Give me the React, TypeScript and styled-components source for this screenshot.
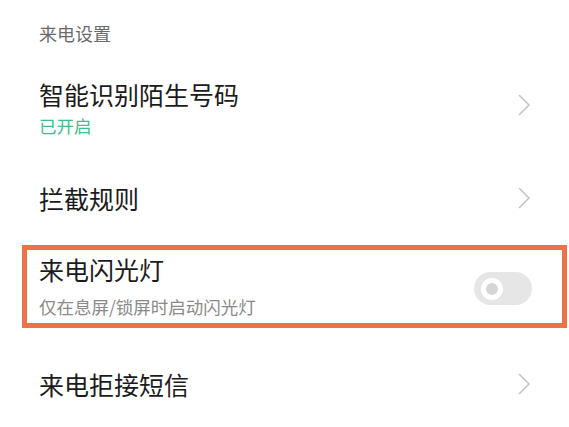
import React from "react"
import styled, {createGlobalStyle} from "styled-components"

const GlobalStyle = createGlobalStyle`
  html, body {
    margin: 0;
    padding: 0;
    background: #ffffff;
  }
  body {
    font-family: "Noto Sans CJK SC", "Noto Sans", sans-serif;
    -webkit-font-smoothing: antialiased;
  }
`

const CONTENT_LEFT = "39px"

type SettingItem = {
  title: string
  subtitle?: string
  subtitleAccent?: boolean
  control: "chevron" | "switch"
  height: number
  highlighted?: boolean
}

const items: Array<SettingItem> = [
  {title: "智能识别陌生号码", subtitle: "已开启", subtitleAccent: true, control: "chevron", height: 84},
  {title: "拦截规则", control: "chevron", height: 95},
  {title: "来电闪光灯", subtitle: "仅在息屏/锁屏时启动闪光灯", control: "switch", height: 83, highlighted: true},
  {title: "来电拒接短信", control: "chevron", height: 112}
]

export default function App() {
  return (
    <Page>
      <GlobalStyle/>
      <SectionHeader>来电设置</SectionHeader>
      {items.map((item) => (
        <Row key={item.title} item={item}/>
      ))}
    </Page>
  )
}

function Row({item}: { item: SettingItem }) {
  const twoLine = !!item.subtitle
  return (
    <RowElement highlighted={!!item.highlighted} style={{height: item.height}}>
      <TextBlock wide={!!item.highlighted}>
        <Title>{item.title}</Title>
        {item.subtitle ? <Subtitle accent={!!item.subtitleAccent}>{item.subtitle}</Subtitle> : null}
      </TextBlock>
      {item.control === "chevron" ? <Chevron raised={twoLine}/> : <Switch/>}
    </RowElement>
  )
}

function Chevron({raised}: { raised: boolean }) {
  return (
    <ChevronBox raised={raised}>
      <svg width="13" height="22" viewBox="0 0 13 22">
        <path d="M1.5 1.5 L11 11 L1.5 20.5" fill="none" stroke="#c4c4c4" strokeWidth="1.6" strokeLinecap="round" strokeLinejoin="round"/>
      </svg>
    </ChevronBox>
  )
}

function Switch() {
  return (
    <SwitchTrack>
      <SwitchKnob/>
    </SwitchTrack>
  )
}

const Page = styled.div`
  width: 569px;
  height: 427px;
  overflow: hidden;
  display: flex;
  flex-direction: column;
  background: #ffffff;
`

const SectionHeader = styled.div`
  flex: none;
  height: 66px;
  display: flex;
  align-items: center;
  padding-left: ${CONTENT_LEFT};
  box-sizing: border-box;
  font-size: 18px;
  color: #6b6b6b;
`

const RowElement = styled.div<{ highlighted: boolean }>`
  flex: none;
  box-sizing: border-box;
  display: flex;
  align-items: center;
  justify-content: space-between;
  padding-left: ${({highlighted}) => (highlighted ? "12px" : CONTENT_LEFT)};
  padding-right: ${({highlighted}) => (highlighted ? "30px" : "38px")};
  margin: ${({highlighted}) => (highlighted ? "0 2px 0 22px" : "0")};
  border: ${({highlighted}) => (highlighted ? "5px solid #ec7346" : "none")};
`

const TextBlock = styled.div<{ wide: boolean }>`
  display: flex;
  flex-direction: column;
  gap: ${({wide}) => (wide ? "12px" : "6px")};
  margin-top: ${({wide}) => (wide ? "-2px" : "0")};
`

const Title = styled.div`
  font-size: 25px;
  line-height: 30px;
  color: #1b1b1b;
`

const Subtitle = styled.div<{ accent: boolean }>`
  font-size: 17.5px;
  line-height: 22px;
  color: ${({accent}) => (accent ? "#44bd8e" : "#8a8a8a")};
`

const ChevronBox = styled.div<{ raised: boolean }>`
  display: flex;
  align-items: center;
  width: 13px;
  height: 22px;
  margin-bottom: ${({raised}) => (raised ? "6px" : "0")};
`

const SwitchTrack = styled.div`
  width: 58px;
  height: 33px;
  border-radius: 17px;
  background: #e6e6e6;
  display: flex;
  align-items: center;
  padding-left: 7px;
  box-sizing: border-box;
  margin-top: 4px;
`

const SwitchKnob = styled.div`
  width: 22px;
  height: 22px;
  border-radius: 50%;
  box-sizing: border-box;
  border: 5px solid #ffffff;
  background: #d6d6d6;
`
